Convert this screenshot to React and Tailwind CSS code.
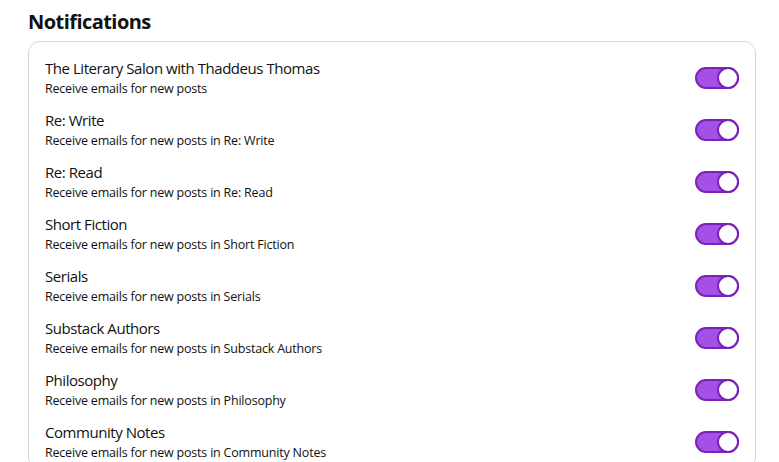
import React, { useState } from "react";

const lists = [
  { name: "The Literary Salon with Thaddeus Thomas", desc: "Receive emails for new posts" },
  { name: "Re: Write", desc: "Receive emails for new posts in Re: Write" },
  { name: "Re: Read", desc: "Receive emails for new posts in Re: Read" },
  { name: "Short Fiction", desc: "Receive emails for new posts in Short Fiction" },
  { name: "Serials", desc: "Receive emails for new posts in Serials" },
  { name: "Substack Authors", desc: "Receive emails for new posts in Substack Authors" },
  { name: "Philosophy", desc: "Receive emails for new posts in Philosophy" },
  { name: "Community Notes", desc: "Receive emails for new posts in Community Notes" },
];

function Toggle({ on, onClick }) {
  return (
    <button
      onClick={onClick}
      className={
        "flex h-[22px] w-[44px] shrink-0 items-center rounded-full border-2 border-[#7a22b8] " +
        (on ? "justify-end bg-[#a450e6]" : "justify-start bg-gray-300")
      }
    >
      <span className="-mx-[2px] block h-[22px] w-[22px] rounded-full border-2 border-[#7a22b8] bg-white" />
    </button>
  );
}

export default function App() {
  const [enabled, setEnabled] = useState(lists.map(() => true));

  const flip = (i) => {
    setEnabled((prev) => prev.map((v, j) => (j === i ? !v : v)));
  };

  return (
    <div className="h-[462px] overflow-hidden bg-white pl-[28px] pr-[23px] pt-[8px] text-[#111] font-['Segoe_UI','Open_Sans',sans-serif]">
      <h1 className="text-[20px] font-bold leading-[28px] tracking-[-0.55px]">Notifications</h1>
      <div className="mt-[5px] rounded-[12px] border border-[#d6d6d6] pl-[16px] pr-[16px] pt-[10px]">
        {lists.map((item, i) => (
          <div key={item.name} className="flex h-[52px] items-center justify-between">
            <div className="flex flex-col">
              <span className="text-[15px] leading-[21px] tracking-[-0.45px]">{item.name}</span>
              <span className="text-[12.5px] leading-[19px] tracking-[-0.2px]">{item.desc}</span>
            </div>
            <Toggle on={enabled[i]} onClick={() => flip(i)} />
          </div>
        ))}
      </div>
    </div>
  );
}
